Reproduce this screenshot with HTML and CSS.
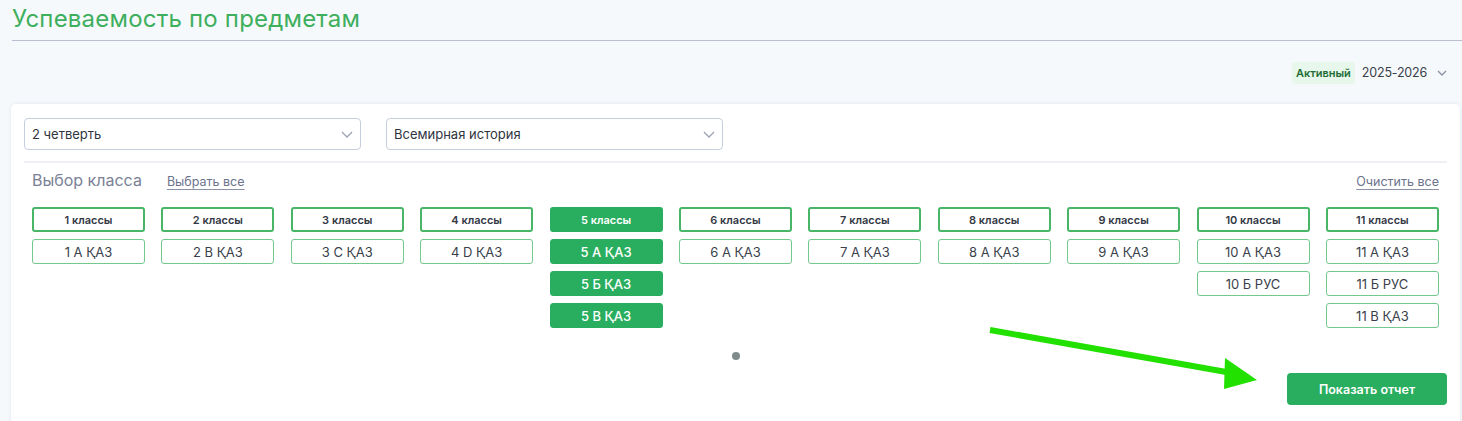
FILE: index.html
```html
<!DOCTYPE html>
<html lang="ru">
<head>
<meta charset="utf-8">
<link rel="stylesheet" href="styles.css">
</head>
<body>
<div class="page">
  <h1 class="title">Успеваемость по предметам</h1>
  <div class="year-row">
    <span class="badge">Активный</span>
    <span class="year">2025-2026</span>
    <svg class="year-chev" width="12" height="12" viewBox="0 0 12 12"><path d="M2 4l4 4 4-4" fill="none" stroke="#8a91a5" stroke-width="1.4"/></svg>
  </div>
  <div class="card">
    <div class="selects">
      <div class="select"><span>2 четверть</span><svg width="14" height="14" viewBox="0 0 14 14"><path d="M2 5l5 5 5-5" fill="none" stroke="#9aa2b4" stroke-width="1.3"/></svg></div>
      <div class="select"><span>Всемирная история</span><svg width="14" height="14" viewBox="0 0 14 14"><path d="M2 5l5 5 5-5" fill="none" stroke="#9aa2b4" stroke-width="1.3"/></svg></div>
    </div>
    <div class="sep"></div>
    <div class="class-head">
      <span class="label">Выбор класса</span>
      <a class="link">Выбрать все</a>
      <a class="link right">Очистить все</a>
    </div>
    <div class="grid">
      <div class="col"><div class="hdr">1 классы</div><div class="item">1 А ҚАЗ</div></div>
      <div class="col"><div class="hdr">2 классы</div><div class="item">2 В ҚАЗ</div></div>
      <div class="col"><div class="hdr">3 классы</div><div class="item">3 С ҚАЗ</div></div>
      <div class="col"><div class="hdr">4 классы</div><div class="item">4 D ҚАЗ</div></div>
      <div class="col"><div class="hdr on">5 классы</div><div class="item on">5 А ҚАЗ</div><div class="item on">5 Б ҚАЗ</div><div class="item on">5 В ҚАЗ</div></div>
      <div class="col"><div class="hdr">6 классы</div><div class="item">6 А ҚАЗ</div></div>
      <div class="col"><div class="hdr">7 классы</div><div class="item">7 А ҚАЗ</div></div>
      <div class="col"><div class="hdr">8 классы</div><div class="item">8 А ҚАЗ</div></div>
      <div class="col"><div class="hdr">9 классы</div><div class="item">9 А ҚАЗ</div></div>
      <div class="col"><div class="hdr">10 классы</div><div class="item">10 А ҚАЗ</div><div class="item">10 Б РУС</div></div>
      <div class="col"><div class="hdr">11 классы</div><div class="item">11 А ҚАЗ</div><div class="item">11 Б РУС</div><div class="item">11 В ҚАЗ</div></div>
    </div>
    <div class="dot-row"><span class="dot"></span></div>
    <div class="footer"><button class="show">Показать отчет</button></div>
  </div>
  <svg class="arrow" width="1462" height="421" viewBox="0 0 1462 421">
    <line x1="990" y1="330" x2="1232" y2="373" stroke="#22e000" stroke-width="6"/>
    <polygon points="1257,380 1225,358 1224,389" fill="#22e000"/>
  </svg>
</div>
</body>
</html>
```
FILE: styles.css
```css
* { box-sizing: border-box; }
html, body { margin: 0; padding: 0; }
body {
  background: #f6f9fc;
  font-family: Inter, "Noto Sans", sans-serif;
  color: #3a3f4b;
  width: 1462px;
  height: 421px;
  overflow: hidden;
}
.page { position: relative; height: 421px; }
.title {
  margin: 0 0 0 12px;
  height: 41px;
  padding: 4px 0 0 0;
  font-size: 24px;
  font-weight: 400;
  color: #3eaf5c;
  border-bottom: 1px solid #b9bed0;
  letter-spacing: 0.2px;
}
.year-row {
  display: flex;
  justify-content: flex-end;
  align-items: center;
  height: 63px;
  padding: 0 14px 0 0;
}
.badge {
  background: #e8f7ec;
  color: #1f6e35;
  font-size: 11px;
  font-weight: 600;
  padding: 4px 4px;
  border-radius: 3px;
  margin-right: 7px;
}
.year { font-size: 12.5px; color: #3a3f4b; margin-right: 9px; letter-spacing: -0.2px; }
.year-chev { display: block; }
.card {
  margin: 0 2px 0 11px;
  background: #fff;
  border-radius: 5px;
  box-shadow: 0 0 4px rgba(40, 60, 90, 0.1);
  padding: 14px 13px 12px 13px;
  height: 330px;
}
.selects { display: flex; gap: 25px; }
.select {
  width: 337px;
  height: 32px;
  border: 1px solid #c6cedb;
  border-radius: 4px;
  display: flex;
  align-items: center;
  justify-content: space-between;
  padding: 0 6px 0 7px;
  font-size: 13px;
  color: #2f3440;
}
.select svg { display: block; }
.sep { height: 2px; background: #eef0f3; margin: 11px 0 0 0; }
.class-head {
  display: flex;
  align-items: baseline;
  padding: 7px 8px 0 8px;
  height: 44px;
}
.label { font-size: 16px; color: #7a8196; margin-right: 25px; }
.link {
  font-size: 12.5px;
  color: #6b738d;
  text-decoration: underline;
  text-underline-offset: 3px;
  text-decoration-color: #8a91a8;
}
.link.right { margin-left: auto; }
.grid {
  display: grid;
  grid-template-columns: repeat(11, 113px);
  justify-content: space-between;
  padding: 0 8px;
  align-items: start;
}
.col { display: flex; flex-direction: column; gap: 7px; }
.hdr, .item {
  height: 25px;
  border-radius: 3px;
  display: flex;
  align-items: center;
  justify-content: center;
}
.hdr {
  border: 2px solid #48b567;
  font-size: 11px;
  font-weight: 600;
  color: #333845;
}
.item {
  border: 1px solid #72c98b;
  font-size: 13px;
  color: #3a3f4b;
}
.hdr.on, .item.on {
  background: #28ae5e;
  border-color: #28ae5e;
  color: #fff;
}
.item.on { font-weight: 500; }
.dot-row { display: flex; justify-content: center; padding: 24px 0 0 0; height: 45px; }
.dot { width: 8px; height: 8px; border-radius: 50%; background: #7f8b8a; }
.footer { display: flex; justify-content: flex-end; }
.show {
  width: 160px;
  height: 32px;
  background: #28ae5e;
  color: #fff;
  border: none;
  border-radius: 4px;
  font-family: Inter, "Noto Sans", sans-serif;
  font-size: 12.5px;
  font-weight: 600;
}
.arrow { position: absolute; left: 0; top: 0; pointer-events: none; }
```
